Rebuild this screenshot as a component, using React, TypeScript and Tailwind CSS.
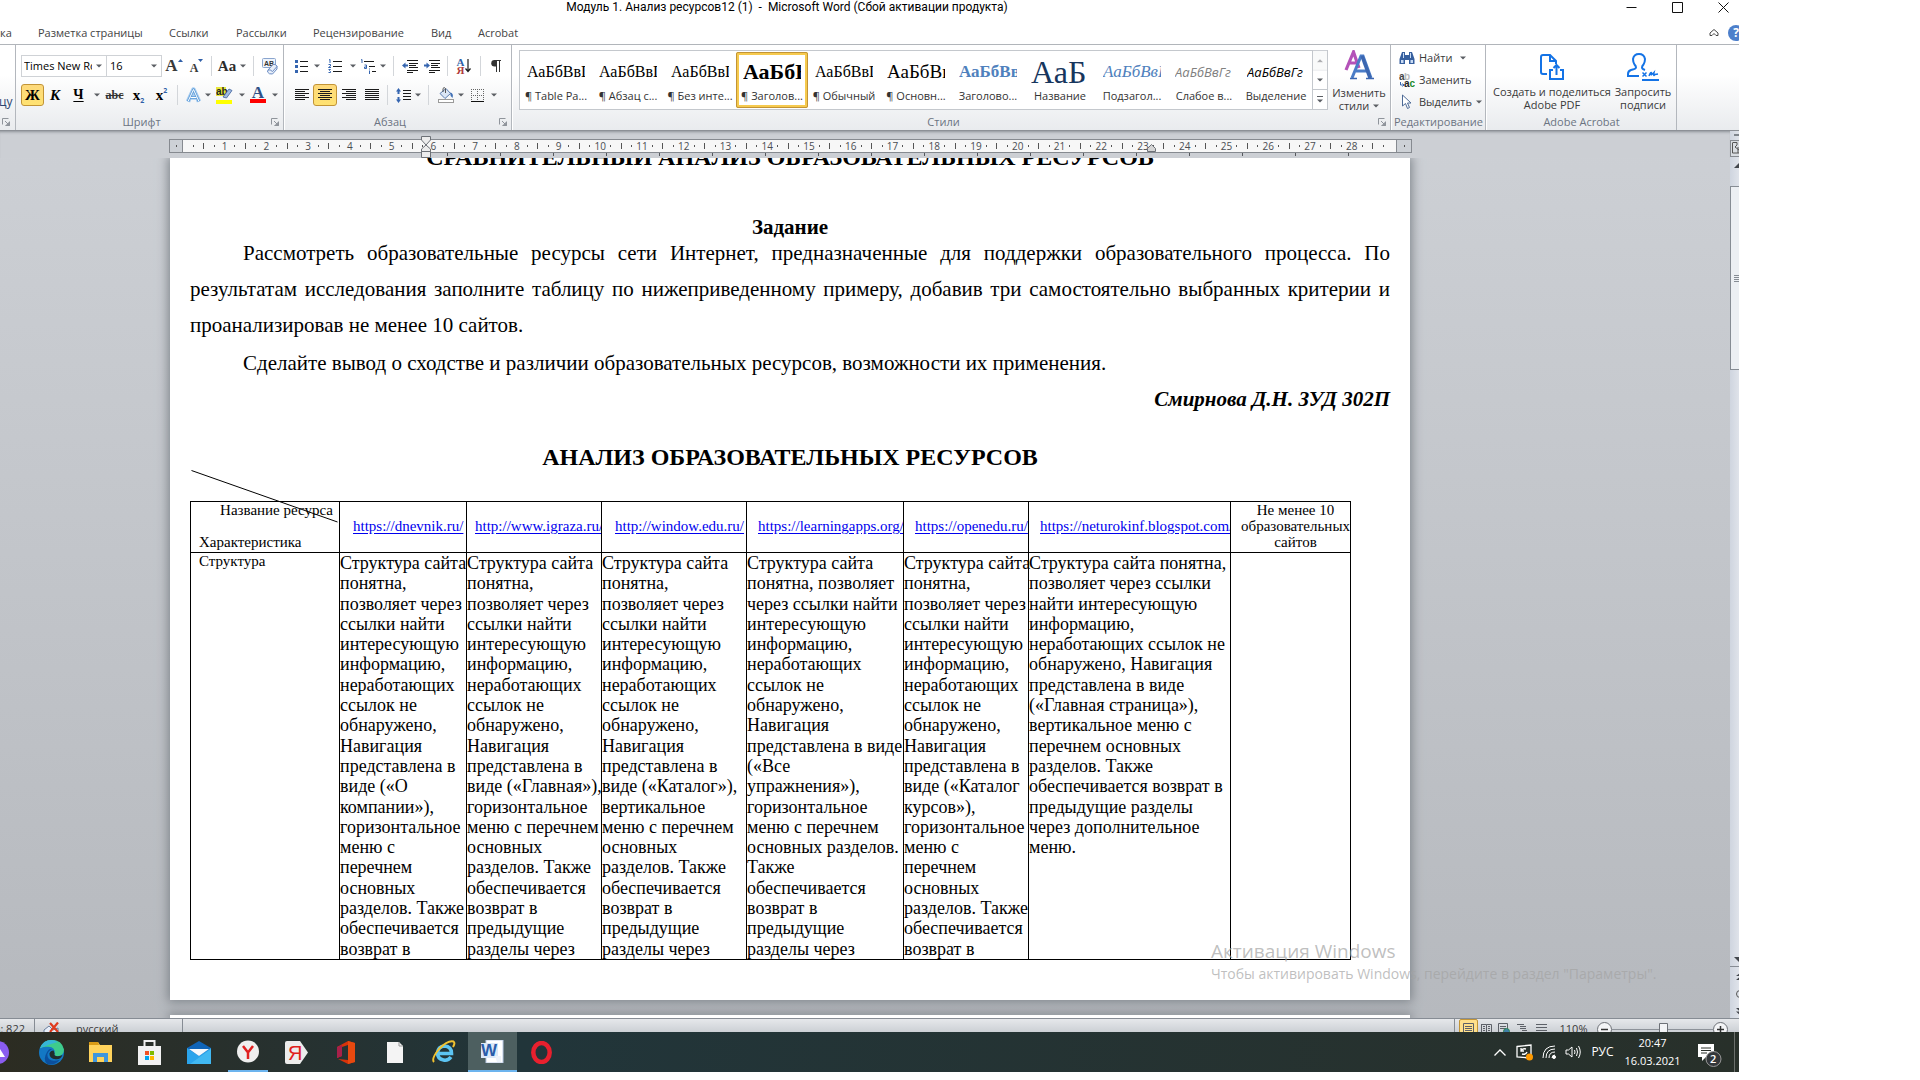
import React from "react";

type Kids = { children?: React.ReactNode };

const ui = "font-['Open_Sans','Noto_Sans',sans-serif]";
const serif = "font-['Liberation_Serif',serif]";

/* ---------- ribbon primitives ---------- */

function Caret() {
  return (
    <svg width="6" height="4" viewBox="0 0 6 4" aria-hidden="true">
      <path d="M0 0.5H6L3 3.5Z" fill="#5b5e63" />
    </svg>
  );
}

function Drop({ label, className }: { label: string; className: string }) {
  return (
    <button type="button" aria-label={label} className={`flex h-[22px] items-center justify-center ${className}`}>
      <Caret />
    </button>
  );
}

function Tool({ label, className, active, children }: Kids & { label: string; className: string; active?: boolean }) {
  return (
    <button
      type="button"
      aria-label={label}
      className={`flex h-[22px] shrink-0 items-center justify-center ${
        active ? "rounded-[3px] border border-[#c29436] bg-linear-to-b from-[#fdd97b] to-[#ffe271]" : ""
      } ${className}`}
    >
      {children}
    </button>
  );
}

function Sep({ className }: { className: string }) {
  return (
    <span className={`flex h-5 items-center justify-center ${className}`}>
      <span className="h-5 w-px bg-[#d3d6da]" />
    </span>
  );
}

function Launcher() {
  return (
    <button type="button" aria-label="Дополнительно" className="flex h-3 w-3 items-center justify-center">
      <svg width="8" height="8" viewBox="0 0 8 8" fill="none" stroke="#8f949b" aria-hidden="true">
        <path d="M0.5 6.5V0.5H6.5M3 3L6 6M7.5 3.5V7.5H3.5" />
        <path d="M7.5 4V7.5H4Z" fill="#8f949b" />
      </svg>
    </button>
  );
}

function Group({ title, className, launcher, children }: Kids & { title: string; className: string; launcher?: boolean }) {
  return (
    <section aria-label={title} className={`flex shrink-0 flex-col border-r border-[#b3b7bd] ${className}`}>
      <div className="h-[69px]">{children}</div>
      <div className="flex h-4 items-center">
        <h2 className="flex-1 text-center text-[11px] leading-4 whitespace-nowrap text-[#6b7482]">{title}</h2>
        {launcher && (
          <span className="mr-[2px] ml-[2px] flex">
            <Launcher />
          </span>
        )}
      </div>
    </section>
  );
}

const alignLines: Record<string, number[][]> = {
  left: [[0, 14], [0, 10], [0, 14], [0, 10], [0, 14], [0, 10]],
  center: [[0, 14], [2, 12], [0, 14], [2, 12], [0, 14], [2, 12]],
  right: [[0, 14], [4, 14], [0, 14], [4, 14], [0, 14], [4, 14]],
  justify: [[0, 14], [0, 14], [0, 14], [0, 14], [0, 14], [0, 14]],
};

function AlignIcon({ kind }: { kind: string }) {
  return (
    <svg width="14" height="12" viewBox="0 0 14 12" stroke="#1b1b1b" aria-hidden="true">
      {alignLines[kind].map(([a, b], i) => (
        <path key={i} d={`M${a} ${i * 2 + 0.5}H${b}`} />
      ))}
    </svg>
  );
}

function IndentIcon({ flip }: { flip?: boolean }) {
  return (
    <svg width="16" height="13" viewBox="0 0 16 13" aria-hidden="true">
      <path d="M5 0.5H16M7 3.5H16M7 5.5H14M7 7.5H16M5 10.5H16M5 12.5H11" stroke="#1b1b1b" />
      <path d={flip ? "M6 5.5L2.5 2.5V4.5H0V6.5H2.5V8.5Z" : "M0 5.5L3.5 2.5V4.5H6V6.5H3.5V8.5Z"} fill="#3565b0" />
    </svg>
  );
}

/* ---------- ribbon groups ---------- */

function FontGroup() {
  return (
    <Group title="Шрифт" className="w-[268px]" launcher>
      <div className="flex h-[42px] items-center pl-[5px]">
        <div className="flex h-[22px] w-[86px] items-center border border-[#cfd2d6] bg-white pr-1">
          <input aria-label="Имя шрифта" defaultValue="Times New Roman" className="w-full min-w-0 flex-1 bg-transparent pl-0.5 text-[11px] text-black" />
          <span className="ml-1 flex"><Caret /></span>
        </div>
        <div className="flex h-[22px] w-[55px] items-center border border-l-0 border-[#cfd2d6] bg-white pr-1">
          <input aria-label="Размер шрифта" defaultValue="16" className="w-full min-w-0 flex-1 bg-transparent pl-[3px] text-[11px] text-black" />
          <Caret />
        </div>
        <Tool label="Увеличить размер" className="w-[24px]">
          <span className={`${serif} text-[17px] leading-5 font-bold text-[#3a3a3a]`}>A</span>
          <svg width="5" height="3" viewBox="0 0 5 3" className="mb-3"><path d="M0 3L2.5 0L5 3Z" fill="#2f5fa8" /></svg>
        </Tool>
        <Tool label="Уменьшить размер" className="w-[21px]">
          <span className={`${serif} pt-1 text-[12px] leading-5 font-bold text-[#3a3a3a]`}>A</span>
          <svg width="5" height="3" viewBox="0 0 5 3" className="mb-3"><path d="M0 0L2.5 3L5 0Z" fill="#2f5fa8" /></svg>
        </Tool>
        <Sep className="w-2" />
        <Tool label="Регистр" className="w-[34px] gap-1">
          <span className={`${serif} text-[15px] leading-5 font-bold text-[#2c2c2c]`}>Aa</span>
          <Caret />
        </Tool>
        <Sep className="w-2" />
        <Tool label="Очистить формат" className="w-[26px]">
          <svg width="18" height="17" viewBox="0 0 18 17" aria-hidden="true">
            <rect x="1.5" y="0.5" width="13" height="9" rx="1" fill="#eef4fc" stroke="#8aa5ce" />
            <text x="3" y="8" fontSize="7" fontWeight="700" fill="#333" fontFamily="Liberation Sans">AB</text>
            <path d="M7 12L12 6.5Q14 5.5 16 8V11L11.5 16Q8 16.5 6.5 14Z" fill="#e8eef8" stroke="#6a8cc4" />
            <path d="M7 12Q9 11 11.5 13.5L16 8.5" fill="none" stroke="#6a8cc4" />
          </svg>
        </Tool>
      </div>
      <div className="flex h-[16px] items-center pl-[5px]">
        <Tool label="Полужирный" active className="w-[23px]"><b className={`${serif} text-[15px] leading-4`}>Ж</b></Tool>
        <Tool label="Курсив" className="w-[22px]"><b className={`${serif} text-[15px] leading-4 italic`}>К</b></Tool>
        <Tool label="Подчёркнутый" className="w-[25px]"><b className={`${serif} text-[14px] leading-4 underline underline-offset-2`}>Ч</b></Tool>
        <Drop label="Вид подчёркивания" className="w-[11px]" />
        <Tool label="Зачёркнутый" className="w-[25px]"><b className={`${serif} text-[12px] leading-4 text-[#333] line-through`}>abc</b></Tool>
        <Tool label="Подстрочный" className="w-[23px]">
          <b className={`${serif} text-[15px] leading-4`}>x</b><b className="mt-3 text-[7px] leading-3 text-[#2f5fa8]">2</b>
        </Tool>
        <Tool label="Надстрочный" className="w-[23px]">
          <b className={`${serif} text-[15px] leading-4`}>x</b><b className="mb-2 text-[7px] leading-3 text-[#2f5fa8]">2</b>
        </Tool>
        <Sep className="w-2" />
        <Tool label="Эффекты текста" className="w-[24px]">
          <svg width="17" height="17" viewBox="0 0 17 17" fill="none" strokeLinejoin="round" aria-hidden="true">
            <path d="M3 14.5L8.5 2.5L14 14.5M5.5 10.5H11.5" stroke="#a9cdf0" strokeWidth="4.5" />
            <path d="M3 14.5L8.5 2.5L14 14.5M5.5 10.5H11.5" stroke="#5b9bd8" strokeWidth="2.5" />
            <path d="M3 14.5L8.5 2.5L14 14.5M5.5 10.5H11.5" stroke="#fff" strokeWidth="1" />
          </svg>
        </Tool>
        <Drop label="Варианты эффектов" className="w-[6px]" />
        <Tool label="Цвет выделения" className="w-[27px]">
          <svg width="17" height="17" viewBox="0 0 17 17" aria-hidden="true">
            <rect width="10" height="9" fill="#e8e83a" />
            <text x="0" y="8" fontSize="10" fontWeight="700" fill="#222" fontFamily="Liberation Sans">ab</text>
            <path d="M7 10L13 2L16 3.5L10.5 11Z" fill="#9fb9e0" stroke="#3c5f9c" strokeWidth="0.8" />
            <rect y="13" width="16" height="4" fill="#ffff00" />
          </svg>
        </Tool>
        <Drop label="Палитра выделения" className="w-[8px]" />
        <Tool label="Цвет текста" className="w-[24px] flex-col">
          <span className={`${serif} h-[12px] text-[17px] leading-3 font-bold text-[#2f4f86]`}>A</span>
          <span className="h-1 w-4 bg-[#fe0000]" />
        </Tool>
        <Drop label="Палитра текста" className="w-[9px]" />
      </div>
    </Group>
  );
}

function ParagraphGroup() {
  return (
    <Group title="Абзац" className="w-[228px] border-l border-l-white" launcher>
      <div className="flex h-[42px] items-center pl-[5px]">
        <Tool label="Маркеры" className="w-[22px]">
          <svg width="13" height="13" viewBox="0 0 13 13" aria-hidden="true">
            <path d="M5 1.5H13M5 6.5H13M5 11.5H13" stroke="#1b1b1b" />
            <path d="M0 0H3V3H0ZM0 5H3V8H0ZM0 10H3V13H0Z" fill="#3565b0" />
          </svg>
        </Tool>
        <Drop label="Вид маркера" className="w-[10px]" />
        <Tool label="Нумерация" className="w-[26px]">
          <svg width="14" height="14" viewBox="0 0 14 14" aria-hidden="true">
            <path d="M5 2.5H14M5 7.5H14M5 12.5H14" stroke="#1b1b1b" />
            <path d="M1 1L2 0.5V4M0.5 5.5H2.5V7L0.5 8.5H3M0.5 10.5H2.5L1.5 11.5L2.5 12.5V13.5H0.5" fill="none" stroke="#3565b0" />
          </svg>
        </Tool>
        <Drop label="Вид нумерации" className="w-[10px]" />
        <Tool label="Многоуровневый список" className="w-[20px]">
          <svg width="17" height="15" viewBox="0 0 17 15" aria-hidden="true">
            <path d="M4 2.5H14M9 7.5H15M12 12.5H16" stroke="#1b1b1b" />
            <path d="M1 1L2 0.5V4M4.5 6H6.5V9.5H4.5V8H6.5M9.5 9.5V10.5M9.5 11.5V15" fill="none" stroke="#3565b0" />
          </svg>
        </Tool>
        <Drop label="Вид списка" className="w-[9px]" />
        <Sep className="w-[12px]" />
        <Tool label="Уменьшить отступ" className="w-[22px]"><IndentIcon /></Tool>
        <Tool label="Увеличить отступ" className="w-[22px]"><IndentIcon flip /></Tool>
        <Sep className="w-2" />
        <Tool label="Сортировка" className="w-[25px]">
          <span className="flex w-2 flex-col items-center">
            <b className={`${serif} h-2 text-[11px] leading-2 text-[#2f5fa8]`}>А</b>
            <b className={`${serif} h-2 text-[11px] leading-2 text-[#b03a3a]`}>Я</b>
          </span>
          <svg width="6" height="14" viewBox="0 0 6 14" aria-hidden="true">
            <path d="M3 0V12M0.500 9.5L3 12.5L5.5 9.5" fill="none" stroke="#1b1b1b" strokeWidth="1.2" />
          </svg>
        </Tool>
        <Sep className="w-2" />
        <Tool label="Отобразить все знаки" className="w-[24px]">
          <svg width="10" height="12" viewBox="0 0 10 12" aria-hidden="true">
            <path d="M10 0.5H4M5.5 0V12M8.5 0V12" stroke="#333" />
            <path d="M5 0H3.5A3 3 0 0 0 3.5 6.5H5Z" fill="#333" />
          </svg>
        </Tool>
      </div>
      <div className="flex h-[16px] items-center pl-[5px]">
        <Tool label="По левому краю" className="w-[23px]"><AlignIcon kind="left" /></Tool>
        <Tool label="По центру" active className="w-[24px]"><AlignIcon kind="center" /></Tool>
        <Tool label="По правому краю" className="w-[24px]"><AlignIcon kind="right" /></Tool>
        <Tool label="По ширине" className="w-[22px]"><AlignIcon kind="justify" /></Tool>
        <Sep className="w-2" />
        <Tool label="Интервал" className="w-[24px]">
          <svg width="15" height="15" viewBox="0 0 15 15" aria-hidden="true">
            <path d="M7 2.5H15M7 5.5H15M7 8.5H15M7 11.5H15" stroke="#1b1b1b" />
            <path d="M2.5 0L5 3.5H3.5V6H1.5V3.5H0ZM2.5 15L5 11.5H3.5V9H1.5V11.5H0Z" fill="#3565b0" />
          </svg>
        </Tool>
        <Drop label="Значение интервала" className="w-[6px]" />
        <Sep className="w-[14px]" />
        <Tool label="Заливка" className="w-[22px]">
          <svg width="17" height="16" viewBox="0 0 17 16" aria-hidden="true">
            <path d="M2 6.5L8 1.5L12.5 6.5L7 11.5Z" fill="#dbe6f5" stroke="#5a7cb0" />
            <path d="M5 5V1.5Q6 -0.5 7.5 1.5V6" fill="none" stroke="#555" />
            <path d="M12 5.5Q16 6 14.5 11Q12 9 12 5.5Z" fill="#3f6fb5" />
            <rect x="0.5" y="12.5" width="15" height="3" fill="#fff" stroke="#9a9a9a" />
          </svg>
        </Tool>
        <Drop label="Цвет заливки" className="w-[8px]" />
        <Tool label="Границы" className="w-[24px]">
          <svg width="13" height="13" viewBox="0 0 13 13" fill="none" stroke="#666" aria-hidden="true">
            <path d="M0 0.5H13M0 6.5H13M0.5 0V12M6.5 0V12M12.5 0V12" strokeDasharray="1 1" />
            <path d="M0 12.5H13" stroke="#111" />
          </svg>
        </Tool>
        <Drop label="Вид границ" className="w-[9px]" />
      </div>
    </Group>
  );
}

const styleItems: { sample: string; name: string; cls: string; active?: boolean }[] = [
  { sample: "АаБбВвГ", name: "¶ Table Pa...", cls: "font-['Liberation_Serif',serif] text-[16px] text-black" },
  { sample: "АаБбВвГ", name: "¶ Абзац с...", cls: "font-['Liberation_Serif',serif] text-[16px] text-black" },
  { sample: "АаБбВвГ", name: "¶ Без инте...", cls: "font-['Liberation_Serif',serif] text-[16px] text-black" },
  { sample: "АаБбВ", name: "¶ Заголов...", cls: "font-['Liberation_Serif',serif] text-[22px] font-bold text-black", active: true },
  { sample: "АаБбВвГ", name: "¶ Обычный", cls: "font-['Liberation_Serif',serif] text-[16px] text-black" },
  { sample: "АаБбВв", name: "¶ Основн...", cls: "font-['Liberation_Serif',serif] text-[19px] text-black" },
  { sample: "АаБбВв", name: "Заголово...", cls: "font-['Liberation_Serif',serif] text-[17px] font-bold text-[#4f81bd]" },
  { sample: "АаБ", name: "Название", cls: "font-['Liberation_Serif',serif] text-[32px] text-[#17365d]" },
  { sample: "АаБбВвГ", name: "Подзагол...", cls: "font-['Liberation_Serif',serif] text-[17px] italic text-[#4f81bd]" },
  { sample: "АаБбВвГг", name: "Слабое в...", cls: "font-['Open_Sans',sans-serif] text-[13px] italic text-[#808080]" },
  { sample: "АаБбВвГг", name: "Выделение", cls: "font-['Open_Sans',sans-serif] text-[13px] italic text-black" },
];

function StylesGroup() {
  return (
    <Group title="Стили" className="w-[879px] border-l border-l-white" launcher>
      <div className="flex pt-[5px] pl-[6px]">
        <div className="flex h-[60px] w-[794px] items-center border border-[#c4c8cd] bg-white">
          {styleItems.map((s) => (
            <button
              key={s.name}
              type="button"
              className={`flex h-14 w-[72px] flex-col items-center rounded-[2px] px-1 ${
                s.active ? "border-3 border-[#f6ca4e] px-px outline outline-[#c29436] -outline-offset-1" : ""
              }`}
            >
              <span className={`flex w-[58px] items-end overflow-hidden whitespace-nowrap ${s.active ? "h-[31px]" : "h-[34px]"}`}>
                <span className={`leading-7 ${s.cls}`}>{s.sample}</span>
              </span>
              <span className="mt-0.5 text-[11px] leading-4 whitespace-nowrap text-[#333]">{s.name}</span>
            </button>
          ))}
        </div>
        <div className="flex h-[60px] w-[15px] flex-col border border-l-0 border-[#c4c8cd] bg-white">
          <button type="button" aria-label="Вверх" className="flex flex-1 rotate-180 items-center justify-center border-t border-[#d9dce0] bg-[#f5f6f7] opacity-50"><Caret /></button>
          <button type="button" aria-label="Вниз" className="flex flex-1 items-center justify-center"><Caret /></button>
          <button type="button" aria-label="Все стили" className="flex flex-1 flex-col items-center justify-center gap-0.5 border-t border-[#c4c8cd]">
            <span className="h-px w-1.5 bg-[#5b5e63]" /><Caret />
          </button>
        </div>
        <button type="button" className="flex flex-1 flex-col items-center text-[11px] leading-[13px] text-[#3a3a3a]">
          <svg width="30" height="30" viewBox="0 0 30 30" fill="none" aria-hidden="true">
            <path d="M2 20L9.5 2L15 18M5 13H12.5" stroke="#b452b8" strokeWidth="3.2" />
            <path d="M8 28L17 6H19L27 28M12 21H23" stroke="#4a7cc7" strokeWidth="3" />
            <path d="M18 6L26 28" stroke="#3b66b0" strokeWidth="3.5" />
            <path d="M6 28.5H13M22 28.5H30" stroke="#3b66b0" strokeWidth="1.5" />
          </svg>
          <span className="mt-[6px]">Изменить</span>
          <span className="flex items-center gap-1">стили <Caret /></span>
        </button>
      </div>
    </Group>
  );
}

function EditGroup() {
  const row = "flex h-[22px] items-center gap-1 text-[11px] leading-4 text-[#3a3a3a]";
  return (
    <Group title="Редактирование" className="w-[95px] border-l border-l-white">
      <div className="flex flex-col items-start pt-0.5 pl-[7px]">
        <button type="button" className={row}>
          <svg width="16" height="14" viewBox="0 0 16 14" aria-hidden="true">
            <path d="M3 1H6V4H10V1H13L15.5 8V13H10V9H6V13H0.5V8Z" fill="#365f9e" />
            <path d="M2 9H4.5V12H2ZM11.5 9H14V12H11.5ZM4 2H5V7H4ZM11 2H12V7H11Z" fill="#c9dcf5" />
          </svg>
          Найти <span className="ml-1 flex"><Caret /></span>
        </button>
        <button type="button" className={row}>
          <svg width="16" height="15" viewBox="0 0 16 15" aria-hidden="true">
            <g fontFamily="Liberation Sans" fontWeight="700" fontSize="10">
              <text x="0" y="7" fill="#444">a</text>
              <text x="5" y="7" fill="#bbb">b</text>
              <text x="5" y="14" fill="#222">a</text>
              <text x="10.5" y="14" fill="#1c8a2a">c</text>
            </g>
            <path d="M1.5 9V12H5M3.5 10.5L5 12L3.5 13.5" fill="none" stroke="#3565b0" />
          </svg>
          Заменить
        </button>
        <button type="button" className={row}>
          <svg width="16" height="16" viewBox="0 0 16 16" aria-hidden="true">
            <path d="M3.5 1V12L6.5 9.5L8.5 14.5L10.5 13.5L8.5 9H12Z" fill="#fff" stroke="#4d6a96" />
          </svg>
          Выделить <span className="flex"><Caret /></span>
        </button>
      </div>
    </Group>
  );
}

function AcrobatGroup() {
  return (
    <Group title="Adobe Acrobat" className="w-[191px] border-l border-l-white">
      <div className="flex h-full pt-2 pl-[4px] text-[11px] leading-[13px] text-[#3a3a3a]">
        <button type="button" className="flex w-[122px] flex-col items-center whitespace-nowrap">
          <svg width="26" height="28" viewBox="0 0 26 28" fill="none" stroke="#1473e6" strokeWidth="2" aria-hidden="true">
            <path d="M8 21H4Q2 21 2 19V4Q2 2 4 2H11L17 8V11M11 2V8H17" />
            <path d="M14 17H11V26H24V17H21M17.5 22V12M14.5 15L17.5 12L20.5 15" />
          </svg>
          <span className="mt-1">Создать и поделиться</span>
          <span>Adobe PDF</span>
        </button>
        <button type="button" className="flex w-[60px] flex-col items-center whitespace-nowrap">
          <svg width="32" height="28" viewBox="0 0 32 28" fill="none" stroke="#1473e6" strokeWidth="2" aria-hidden="true">
            <path d="M12 23H1V21Q1 18 4 17Q9 16 9 14.500Q9 13 7.5 11.5Q6 9 6 6Q7 1 12 1Q17 1 18 6Q18 9 16.5 11.5Q15 13 15 14.500Q15 16 18 17" />
            <path d="M15 27H32" />
            <path d="M15.5 19.5L19.5 23.5M19.5 19.5L15.5 23.5M22 23Q24 18 24.5 20Q23 24 27 19.5Q26 24 28 21.5L31 21" strokeWidth="1.5" />
          </svg>
          <span className="mt-1">Запросить</span>
          <span>подписи</span>
        </button>
      </div>
    </Group>
  );
}

/* ---------- rulers and document ---------- */

function Ruler() {
  const marks = Array.from({ length: 115 }, (_, i) => i + 1);
  return (
    <div className="relative mr-[318px] ml-[169px] flex h-[14px] border border-[#868a90] bg-[#f7f7f7]">
      <span className="flex w-[13px] items-center justify-center border-r border-[#868a90] bg-[#cdd1d6]"><i className="h-0.5 w-px bg-[#555]" /></span>
      <div className="flex flex-1 pr-[8px] pl-[5px]">
        {marks.map((m) => (
          <span key={m} className="flex flex-1 basis-0 items-center justify-center text-[10px] leading-3 text-[#4a4d52]">
            <span className="flex w-0 justify-center">
              {m % 4 === 0 ? m / 4 : <i className={m % 4 === 2 ? "h-1.5 w-px shrink-0 bg-[#555]" : "h-0.5 w-px shrink-0 bg-[#555]"} />}
            </span>
          </span>
        ))}
      </div>
      <span className="flex w-[15px] items-center justify-center border-l border-[#868a90] bg-[#cdd1d6]"><i className="h-0.5 w-px bg-[#555]" /></span>
      <svg width="10" height="23" viewBox="0 0 10 23" className="absolute -top-1 left-[251px]" fill="#ececec" stroke="#6d7177" aria-hidden="true">
        <path d="M0.5 0.5H9.5V4L5 9L0.5 4ZM0.5 15.5V13L5 9L9.5 13V15.5ZM0.5 15.5H9.5V21.5H0.5Z" />
      </svg>
      <svg width="9" height="8" viewBox="0 0 9 8" className="absolute top-1 left-[977px]" fill="#d5d5d5" stroke="#6d7177" aria-hidden="true">
        <path d="M0.5 7.5V4.5L4.5 0.5L8.5 4.5V7.5Z" />
      </svg>
    </div>
  );
}

const intro = ["Структура сайта", "понятна,", "позволяет через", "ссылки найти", "интересующую", "информацию,", "неработающих", "ссылок не", "обнаружено,", "Навигация", "представлена в"];
const outro = ["разделов. Также", "обеспечивается", "возврат в"];

const resources: { url: string; pad: string; lines: string[] }[] = [
  { url: "https://dnevnik.ru/", pad: "pl-[13px]", lines: [...intro, "виде («О", "компании»),", "горизонтальное", "меню с", "перечнем", "основных", ...outro] },
  { url: "http://www.igraza.ru/", pad: "pl-[8px]", lines: [...intro, "виде («Главная»),", "горизонтальное", "меню с перечнем", "основных", ...outro, "предыдущие", "разделы через"] },
  { url: "http://window.edu.ru/", pad: "pl-[13px]", lines: [...intro, "виде («Каталог»),", "вертикальное", "меню с перечнем", "основных", ...outro, "предыдущие", "разделы через"] },
  {
    url: "https://learningapps.org/",
    pad: "pl-[11px]",
    lines: ["Структура сайта", "понятна, позволяет", "через ссылки найти", "интересующую", "информацию,", "неработающих", "ссылок не", "обнаружено,", "Навигация", "представлена в виде", "(«Все", "упражнения»),", "горизонтальное", "меню с перечнем", "основных разделов.", "Также", "обеспечивается", "возврат в", "предыдущие", "разделы через"],
  },
  { url: "https://openedu.ru/", pad: "pl-[11px]", lines: [...intro, "виде («Каталог", "курсов»),", "горизонтальное", "меню с", "перечнем", "основных", ...outro] },
  {
    url: "https://neturokinf.blogspot.com/",
    pad: "pl-[11px]",
    lines: ["Структура сайта понятна,", "позволяет через ссылки", "найти интересующую", "информацию,", "неработающих ссылок не", "обнаружено, Навигация", "представлена в виде", "(«Главная страница»),", "вертикальное меню с", "перечнем основных", "разделов. Также", "обеспечивается возврат в", "предыдущие разделы", "через дополнительное", "меню."],
  },
];

function ResourceTable() {
  const cell = "border border-black p-0 align-top font-normal";
  return (
    <table className="w-[1160px] table-fixed border-collapse">
      <colgroup>
        <col className="w-[149px]" />
        <col className="w-[127px]" />
        <col className="w-[135px]" />
        <col className="w-[145px]" />
        <col className="w-[157px]" />
        <col className="w-[125px]" />
        <col className="w-[202px]" />
        <col className="w-[120px]" />
      </colgroup>
      <thead>
        <tr className="h-[51px]">
          <th className={`${cell} relative text-left text-[15px] leading-4`}>
            <div className="pr-1.5 text-right">Название ресурса</div>
            <div className="mt-4 pl-2">Характеристика</div>
            <svg width="148" height="53" viewBox="0 0 148 53" className="absolute -top-8 left-0" aria-hidden="true">
              <path d="M0.5 0.5L146.5 52" stroke="#000" />
            </svg>
          </th>
          {resources.map((r) => (
            <th key={r.url} className={`${cell} text-left`}>
              <div className={`overflow-hidden pt-3 whitespace-nowrap ${r.pad}`}>
                <a href={r.url} className="text-[15px] leading-5 text-[#0000ee] underline underline-offset-2">{r.url}</a>
              </div>
            </th>
          ))}
          <th className={`${cell} pl-[10px] text-center text-[15px] leading-4`}>
            Не менее 10<br />образовательных<br />сайтов
          </th>
        </tr>
      </thead>
      <tbody>
        <tr>
          <td className={`${cell} pl-2 text-[15px] leading-4`}>Структура</td>
          {resources.map((r) => (
            <td key={r.url} className={cell}>
              <div className="grid h-[406px] grid-rows-[repeat(20,minmax(0,1fr))] text-[18px] leading-5 whitespace-nowrap">
                {r.lines.map((l) => (
                  <span key={l}>{l}</span>
                ))}
              </div>
            </td>
          ))}
          <td className={cell} />
        </tr>
      </tbody>
    </table>
  );
}

function Page() {
  return (
    <article className={`${serif} mr-[320px] ml-[170px] overflow-hidden bg-white pr-[20px] pb-[40px] pl-[20px] text-black shadow-[0_0_10px_2px_#7f858b]`}>
      <h1 className="-mt-[14px] h-[75px] text-center text-[24px] leading-[26px] font-bold">СРАВНИТЕЛЬНЫЙ АНАЛИЗ ОБРАЗОВАТЕЛЬНЫХ РЕСУРСОВ</h1>
      <h2 className="text-center text-[21px] leading-4 font-bold">Задание</h2>
      <p className="text-[21px] leading-9">
        <span className="block pl-[53px] [text-align-last:justify]">Рассмотреть образовательные ресурсы сети Интернет, предназначенные для поддержки образовательного процесса. По</span>
        <span className="block [text-align-last:justify]">результатам исследования заполните таблицу по нижеприведенному примеру, добавив три самостоятельно выбранных критерии и</span>
        <span className="block">проанализировав не менее 10 сайтов.</span>
      </p>
      <p className="mt-[2px] pl-[53px] text-[21px] leading-9">Сделайте вывод о сходстве и различии образовательных ресурсов, возможности их применения.</p>
      <p className="text-right text-[21px] leading-9 font-bold italic">Смирнова Д.Н. ЗУД 302П</p>
      <h2 className="mt-[28px] mb-[32px] text-center text-[24px] leading-6 font-bold">АНАЛИЗ ОБРАЗОВАТЕЛЬНЫХ РЕСУРСОВ</h2>
      <ResourceTable />
    </article>
  );
}

function ScrollBar() {
  return (
    <div className="flex w-[9px] shrink-0 flex-col overflow-hidden bg-linear-to-r from-[#cfd5df] to-[#dfe3ea] pt-[3px]" aria-hidden="true">
      <div className="ml-1 h-0.5 bg-[#7f858c]" />
      <div className="mt-1 h-[17px] border border-r-0 border-[#868a90] bg-[#d9dde2]">
        <svg width="8" height="14" viewBox="0 0 8 14" fill="none" stroke="#555"><path d="M1.5 1.5V12H8M2 1.5H6V4L4 6M4 6L8 9M7 6V12" /></svg>
      </div>
      <svg className="mt-1.5 ml-1 shrink-0" width="10" height="5" viewBox="0 0 10 5"><path d="M0 5L5 0L10 5Z" fill="#43474d" /></svg>
      <div className="mt-[18px] flex h-[184px] shrink-0 flex-col justify-center gap-px border border-r-0 border-[#868c94] bg-[#eceff3] pl-[3px]">
        <i className="h-px bg-[#868c94]" /><i className="h-px bg-[#868c94]" /><i className="h-px bg-[#868c94]" /><i className="h-px bg-[#868c94]" />
      </div>
      <div className="flex-1" />
      <svg className="ml-1 shrink-0" width="10" height="5" viewBox="0 0 10 5"><path d="M0 0L5 5L10 0Z" fill="#43474d" /></svg>
      <div className="mt-1 flex h-[52px] shrink-0 flex-col items-start gap-[10px] border-t border-[#868c94] pt-1.5 pl-1.5">
        <svg width="8" height="7" viewBox="0 0 8 7" fill="#43474d"><path d="M0 3L4 0L8 3ZM0 7L4 3.5L8 7Z" /></svg>
        <svg width="8" height="8" viewBox="0 0 8 8" fill="none" stroke="#555"><circle cx="4" cy="4" r="3.5" /></svg>
        <svg width="8" height="7" viewBox="0 0 8 7" fill="#43474d"><path d="M0 0L4 3.5L8 0ZM0 3.5L4 7L8 3.5Z" /></svg>
      </div>
    </div>
  );
}

/* ---------- status bar and taskbar ---------- */

function ViewIcon({ d }: { d: string }) {
  return <svg width="11" height="11" viewBox="0 0 11 11" fill="none" stroke="#5d6168" aria-hidden="true"><path d={d} /></svg>;
}

function StatusBar() {
  return (
    <footer className="flex h-[14px] items-start overflow-hidden border-t border-[#868c94] bg-linear-to-b from-[#e6e8eb] to-[#ccd0d5] text-[11px] leading-4 text-[#3a3a3a]">
      <div className="flex h-5 w-[35px] shrink-0 items-start justify-end border-r border-[#868c94] pt-0.5 pr-[9px]"><span className="whitespace-nowrap">Число слов: 822</span></div>
      <button type="button" aria-label="Правописание" className="ml-[8px] pt-[3px]">
        <svg width="17" height="16" viewBox="0 0 17 16" aria-hidden="true">
          <path d="M1 8L6 4L10 8L15 6V12L8 15L1 12Z" fill="#e8eef8" stroke="#6a7f9e" />
          <path d="M7 1L15 10M15 0.5L7 10" stroke="#e03a1e" strokeWidth="2.2" />
        </svg>
      </button>
      <div className="ml-[16px] h-5 w-[107px] border-r border-[#868c94] pt-0.5">русский</div>
      <div className="h-5 flex-1 border-r border-[#868c94]" />
      <div className="flex h-5 w-[284px] shrink-0 items-start">
        <button type="button" aria-label="Разметка страницы" className="ml-[4px] flex h-5 w-[19px] justify-center rounded-[2px] border border-[#c29436] bg-[#ffe08a] pt-[3px]"><ViewIcon d="M0.5 0.5H10.5V12H0.5ZM2 3.5H9M2 5.5H9M2 7.5H9M2 9.5H9" /></button>
        <button type="button" aria-label="Режим чтения" className="flex w-[17px] justify-center pt-1"><ViewIcon d="M0.5 1.5H5.5V12M5.5 1.5H10.5V12H0.5V1M2 3.5H4M2 5.5H4M2 7.5H4M7 3.5H9M7 5.5H9M7 7.5H9" /></button>
        <button type="button" aria-label="Веб-документ" className="flex w-[18px] justify-center pt-1">
          <svg width="12" height="11" viewBox="0 0 12 11" fill="none" stroke="#5d6168" aria-hidden="true"><path d="M0.5 0.5H9.5V12H0.5ZM2 3.5H8M2 5.5H8" /><circle cx="8.5" cy="8.5" r="3" fill="#3f7fa8" stroke="#2f8a50" /></svg>
        </button>
        <button type="button" aria-label="Структура" className="flex w-[19px] justify-center pt-1"><ViewIcon d="M0 1.5H7M3 3.5H9M3 5.5H9M5 7.5H10M5 9.5H10" /></button>
        <button type="button" aria-label="Черновик" className="flex w-[19px] justify-center pt-1"><ViewIcon d="M0 1.5H11M0 4.5H11M0 7.5H11M0 10.5H11" /></button>
        <span className="w-[45px] pt-0.5 text-center">110%</span>
        <svg width="134" height="18" viewBox="0 0 134 18" className="mt-0.5" fill="none" stroke="#6d7177" aria-hidden="true">
          <path d="M16 8.5H117" stroke="#8d9299" />
          <circle cx="8.5" cy="8.5" r="7" fill="#f3f4f6" /><path d="M5 8.5H12" stroke="#333" strokeWidth="1.5" />
          <path d="M63.5 2.5H71.5V11L67.5 14.5L63.5 11Z" fill="#f3f4f6" />
          <circle cx="124.5" cy="8.5" r="7" fill="#f3f4f6" /><path d="M121 8.5H128M124.5 5V12" stroke="#333" strokeWidth="1.5" />
        </svg>
      </div>
    </footer>
  );
}

function Task({ label, className = "", children }: Kids & { label: string; className?: string }) {
  return (
    <button type="button" aria-label={label} className={`flex h-10 w-[49px] shrink-0 items-center justify-center ${className}`}>
      {children}
    </button>
  );
}

function Taskbar() {
  return (
    <nav aria-label="Панель задач" className="flex h-10 items-center overflow-hidden bg-linear-to-r from-[#2c2c22] via-[#21353a] via-30% to-[#28302a] text-white">
      <Task label="Яндекс Алиса" className="-ml-[22px] pr-[10px]">
        <svg width="23" height="23" viewBox="0 0 23 23" aria-hidden="true"><circle cx="11.5" cy="11.5" r="11.5" fill="#8a5cf0" /><path d="M8 16L14 8L19 16Z" fill="#fff" /></svg>
      </Task>
      <Task label="Edge">
        <svg width="25" height="25" viewBox="0 0 24 24" aria-hidden="true">
          <circle cx="12" cy="12" r="12" fill="#1378c4" />
          <path d="M1 8Q4 0 12 0Q22 0 24 9Q24 15 18 15.5Q14 15.5 15 13Q16 7 9 6.5Q3 6 1 8Z" fill="#3ecb8c" />
          <path d="M1 8Q4 0 12 0Q15 0 18 2Q10 4 1 8Z" fill="#36b5d8" />
          <path d="M8 14Q8 22 20 19Q15 25 8 23Q3 19 8 11Q10 8 12.5 9Q9 10 8 14Z" fill="#0b4f9c" />
          <path d="M15 13Q14 15.5 18 15.5Q21 15.5 22.5 14.500Q21 19 16 18.5Q10 18 10 13Q11 10 14 10Z" fill="#202d2c" />
        </svg>
      </Task>
      <Task label="Проводник">
        <svg width="23" height="21" viewBox="0 0 23 21" aria-hidden="true"><path d="M0 0H9L11 3H23V20H0Z" fill="#ffd35c" /><path d="M0 0H9L10 3H0Z" fill="#d99b16" /><path d="M4 20V11H19V20H15V15H8V20Z" fill="#3f96dd" /></svg>
      </Task>
      <Task label="Microsoft Store">
        <svg width="23" height="25" viewBox="0 0 23 25" aria-hidden="true"><path d="M6.5 7V1H16.5V7" fill="none" stroke="#f0f0f0" strokeWidth="2" /><rect y="6" width="23" height="19" fill="#f2f2f2" /><path d="M7 11H11V15H7Z" fill="#f25022" /><path d="M12 11H16V15H12Z" fill="#7fba00" /><path d="M7 16H11V20H7Z" fill="#00a4ef" /><path d="M12 16H16V20H12Z" fill="#ffb900" /></svg>
      </Task>
      <Task label="Почта">
        <svg width="24" height="23" viewBox="0 0 24 23" aria-hidden="true"><path d="M0 7L12 0L24 7V23H0Z" fill="#0f64b8" /><path d="M0 7L12 15L24 7V23H0Z" fill="#2aa4ec" /><path d="M2 8H22L12 15Z" fill="#f5f9fd" /><path d="M24 8V23H3Z" fill="#4cc0f5" opacity=".7" /></svg>
      </Task>
      <Task label="Яндекс Браузер">
        <span className="flex h-10 w-10 flex-col items-center border-b-2 border-[#6cb4ee] pt-[8px]">
          <svg width="22" height="23" viewBox="0 0 22 23" aria-hidden="true"><circle cx="11" cy="11.5" r="11" fill="#efefef" /><path d="M6 6L11 12.5L16 6M11 12V19" fill="none" stroke="#e02020" strokeWidth="2.5" /></svg>
        </span>
      </Task>
      <Task label="Яндекс">
        <svg width="23" height="23" viewBox="0 0 23 23" aria-hidden="true"><path d="M2 0H15L23 11.5L15 23H2Q0 23 0 21V2Q0 0 2 0Z" fill="#ececec" /><text x="3" y="19" fontSize="20" fill="#e0201b" fontFamily="Liberation Sans">Я</text></svg>
      </Task>
      <Task label="Office">
        <svg width="18" height="23" viewBox="0 0 18 23" aria-hidden="true"><path d="M0 6L11 0L18 2V21L11 23L1 18L11 19V4L5 6V15L0 17Z" fill="#d8330a" /><path d="M11 0L18 2V21L11 23Z" fill="#e8490f" /><path d="M0 6L5 4V15L0 17Z" fill="#a8204a" /></svg>
      </Task>
      <Task label="Документ">
        <svg width="16" height="21" viewBox="0 0 16 21" aria-hidden="true"><path d="M0 0H12L16 4V21H0Z" fill="#f4f4f4" /><path d="M12 0V4H16" fill="none" stroke="#999" /></svg>
      </Task>
      <Task label="Internet Explorer">
        <svg width="24" height="24" viewBox="0 0 24 24" fill="none" aria-hidden="true"><path d="M19 17Q16 21 11.5 20Q5.5 19 5.5 13Q6 6.5 12.5 6Q19.5 6.5 19.5 13.5H6" stroke="#5cc4f2" strokeWidth="3.6" /><path d="M2 22Q-1 19 7 9Q16 0 21.5 1.5Q23.5 3 21 7" stroke="#f2c230" strokeWidth="2" /></svg>
      </Task>
      <Task label="Word" className="border-b-2 border-[#6cb4ee] bg-[#4d5f60]">
        <svg width="23" height="23" viewBox="0 0 23 23" aria-hidden="true"><path d="M5 0H22V23H5Z" fill="#fff" stroke="#b9c9e4" /><path d="M0 3H17V18H0Z" fill="#dce8f8" /><text x="0" y="16" fontSize="17" fontWeight="700" fill="#2a5caa" fontFamily="Liberation Sans">W</text><path d="M14 16H20V22H16Z" fill="#eef3fb" /></svg>
      </Task>
      <Task label="Opera">
        <svg width="23" height="23" viewBox="0 0 23 23" aria-hidden="true"><ellipse cx="11.5" cy="11.5" rx="8.2" ry="9.5" fill="none" stroke="#e8202e" strokeWidth="4.500" /></svg>
      </Task>
      <div className="flex-1" />
      <div className="flex h-10 shrink-0 items-center">
        <button type="button" aria-label="Скрытые значки" className="flex w-[24px] justify-center"><svg width="12" height="7" viewBox="0 0 12 7" fill="none" stroke="#fff" strokeWidth="1.3"><path d="M0.5 6.5L6 1L11.5 6.5" /></svg></button>
        <span className="flex w-[25px] justify-center">
          <svg width="18" height="17" viewBox="0 0 18 17" fill="none" stroke="#fff" aria-hidden="true"><path d="M1 2.5L15 1V14L1 13ZM5 7Q6 4 10 5M5 4V7H8M11 8Q10 11 6 10" strokeWidth="1.3" /><circle cx="13.5" cy="13" r="3.5" fill="#ff9a00" stroke="none" /></svg>
        </span>
        <span className="flex w-[24px] justify-center">
          <svg width="14" height="14" viewBox="0 0 14 14" fill="none" stroke="#fff" aria-hidden="true"><path d="M1 13Q1 1 13 1M4 13Q4 4 13 4M7 13Q7 7 13 7M10 13Q10 10 13 10" /><circle cx="12" cy="12" r="1.5" fill="#fff" /></svg>
        </span>
        <span className="flex w-[25px] justify-center">
          <svg width="17" height="14" viewBox="0 0 17 14" fill="none" stroke="#fff" aria-hidden="true"><path d="M1 5H3.5L7 2V12L3.5 9H1ZM9.5 5Q10.5 7 9.5 9M11.5 3Q13.5 7 11.5 11M13.5 1Q17 7 13.5 13" /></svg>
        </span>
        <span className="w-[33px] text-center text-[12px] leading-4">РУС</span>
        <span className="flex w-[67px] flex-col text-center text-[11px] leading-[18px]"><time>20:47</time><time>16.03.2021</time></span>
        <button type="button" aria-label="Уведомления" className="relative ml-1 flex h-10 w-[37px] items-start pt-[10px] pl-2">
          <svg width="26" height="26" viewBox="0 0 26 26" aria-hidden="true"><path d="M0 2H16V15H8L4 19V15H0Z" fill="#fff" /><path d="M3 6H13M3 8.5H13M3 11H9" stroke="#2a302a" /><circle cx="15.5" cy="17" r="7.5" fill="#33373a" stroke="#999" /></svg>
          <span className="absolute top-[19px] left-[20px] text-[11px] leading-4 font-semibold">2</span>
        </button>
        <span className="mr-1 ml-[7px] h-10 w-px bg-[#6b706c]" />
      </div>
    </nav>
  );
}

/* ---------- window ---------- */

export default function App() {
  const ticks = Array.from({ length: 18 }, (_, i) => i);
  return (
    <div className={`${ui} min-h-screen bg-white`}>
      <div className="relative mr-[181px] overflow-hidden">
        <header className="relative flex h-[15px] items-center justify-center">
          <h1 className="mr-[165px] font-['Roboto',sans-serif] text-[12px] leading-[15px] whitespace-pre text-black">Модуль 1. Анализ ресурсов12 (1)  -  Microsoft Word (Сбой активации продукта)</h1>
          <div className="absolute top-0 right-[10px] flex items-center gap-[35px]">
            <button type="button" aria-label="Свернуть" className="flex h-[14px] items-center"><svg width="11" height="11" viewBox="0 0 11 11" stroke="#111"><path d="M0.5 5.5H10.5" /></svg></button>
            <button type="button" aria-label="Развернуть" className="flex h-[14px] items-center"><svg width="11" height="11" viewBox="0 0 11 11" stroke="#111" fill="none"><path d="M0.5 0.5H10.5V10.5H0.5Z" /></svg></button>
            <button type="button" aria-label="Закрыть" className="flex h-[14px] items-center"><svg width="11" height="11" viewBox="0 0 11 11" stroke="#111"><path d="M0.5 0.5L10.5 10.5M10.5 0.5L0.5 10.5" /></svg></button>
          </div>
        </header>

        <nav aria-label="Вкладки ленты" className="flex h-[30px] items-center border-b border-[#b1b5ba] pt-[7px] text-[11px] leading-4 whitespace-nowrap text-[#444]">
          <button type="button" className="w-[38px] text-left">ка</button>
          <button type="button" className="w-[131px] text-left">Разметка страницы</button>
          <button type="button" className="w-[67px] text-left">Ссылки</button>
          <button type="button" className="w-[77px] text-left">Рассылки</button>
          <button type="button" className="w-[118px] text-left">Рецензирование</button>
          <button type="button" className="w-[47px] text-left">Вид</button>
          <button type="button" className="text-left">Acrobat</button>
          <span className="flex-1" />
          <svg width="10" height="8" viewBox="0 0 10 8" fill="none" stroke="#444" className="mr-[9px]" aria-hidden="true"><path d="M1 4L5 0.5L9 4V6.5H7L5 4.5L3 6.5H1Z" /></svg>
          <button type="button" aria-label="Справка" className="-mr-[5px] flex h-4 w-4 items-center justify-center rounded-full bg-[#4c7fcb] text-[12px] font-bold text-white">?</button>
        </nav>

        <div className="flex h-[86px] overflow-hidden border-b border-[#8c9096] bg-linear-to-b from-white from-35% to-[#e9ebee]">
          <div className="flex w-[16px] shrink-0 flex-col items-start border-r border-[#b3b7bd]">
            <span className="h-[69px] w-2 pt-[49px] text-[12px] leading-4 text-[#2b4470]"><span className="-ml-px block">цу</span></span>
            <span className="flex h-4 items-center"><Launcher /></span>
          </div>
          <FontGroup />
          <ParagraphGroup />
          <StylesGroup />
          <EditGroup />
          <AcrobatGroup />
        </div>

        <main className="flex bg-linear-to-b from-[#cdd0d5] to-[#b6b9be]">
          <div className="min-w-0 flex-1 overflow-hidden">
            <div className="relative z-10 h-[27px] bg-[#cccfd4] pt-[8px] shadow-[inset_0_3px_3px_-2px_#8c9096]">
              <Ruler />
              <div className="ml-[447px] flex gap-[52px]">
                {ticks.map((t) => (
                  <i key={t} className="h-[3px] w-px bg-[#55585d]" />
                ))}
              </div>
            </div>
            <Page />
            <div className="mt-[15px] mr-[320px] ml-[170px] h-[3px] bg-white shadow-[0_0_10px_2px_#7f858b]" />
          </div>
          <ScrollBar />
        </main>

        <StatusBar />
        <Taskbar />

        <div className="pointer-events-none absolute right-[74px] bottom-[88px] w-[454px] whitespace-nowrap text-[#a3a3a3]/70">
          <p className="text-[19px] leading-[26px]">Активация Windows</p>
          <p className="text-[14px] leading-[20px]">Чтобы активировать Windows, перейдите в раздел "Параметры".</p>
        </div>
      </div>
    </div>
  );
}
